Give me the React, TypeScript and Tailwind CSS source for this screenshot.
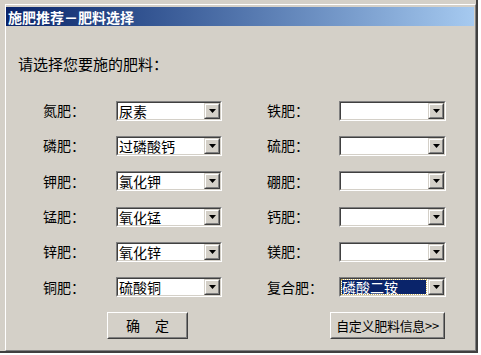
import * as React from 'react';

const font = { fontFamily: '"Noto Sans CJK SC", "Noto Sans", sans-serif' };

interface ComboProps {
  value?: string;
  selected?: boolean;
  width: string;
}

function Combo({ value, selected, width }: ComboProps) {
  return (
    <div className={`${width} h-[20px] border border-t-[#808080] border-l-[#808080] border-r-white border-b-white`}>
      <div className="flex h-full border border-t-[#404040] border-l-[#404040] border-r-[#d4d0c8] border-b-[#d4d0c8] bg-white">
        <div className="flex-1 flex items-center pl-[1px] pr-[2px] min-w-0">
          {selected ? (
            <div className="h-[14px] w-full flex items-center bg-[#0a246a] text-white text-[14px] leading-none outline-1 outline-dotted outline-[#c8b060]">
              {value}
            </div>
          ) : (
            <span className="text-[14px] leading-none text-black">{value}</span>
          )}
        </div>
        <div className="w-[16px] h-full border border-t-[#d4d0c8] border-l-[#d4d0c8] border-r-[#404040] border-b-[#404040]">
          <div className="w-full h-full flex items-center justify-center bg-[#d4d0c8] border border-t-white border-l-white border-r-[#808080] border-b-[#808080]">
            <svg width="7" height="4" viewBox="0 0 7 4">
              <path d="M0 0h7L3.5 4z" fill="#000" />
            </svg>
          </div>
        </div>
      </div>
    </div>
  );
}

function Button({ children, width }: { children: React.ReactNode; width: string }) {
  return (
    <div className={`${width} h-[27px] border border-t-white border-l-white border-r-[#404040] border-b-[#404040]`}>
      <div className="w-full h-full flex items-center justify-center whitespace-nowrap bg-[#d4d0c8] border border-t-[#d4d0c8] border-l-[#d4d0c8] border-r-[#808080] border-b-[#808080] text-[14px] text-black">
        {children}
      </div>
    </div>
  );
}

const rows: [string, string, string, string, boolean][] = [
  ['氮肥：', '尿素', '铁肥：', '', false],
  ['磷肥：', '过磷酸钙', '硫肥：', '', false],
  ['钾肥：', '氯化钾', '硼肥：', '', false],
  ['锰肥：', '氧化锰', '钙肥：', '', false],
  ['锌肥：', '氧化锌', '镁肥：', '', false],
  ['铜肥：', '硫酸铜', '复合肥：', '磷酸二铵', true],
];

export default function App() {
  return (
    <div className="w-[481px] h-[355px] bg-white" style={font}>
      <div className="w-[478px] h-[353px] bg-[#d4d0c8] pl-[5px] pt-[4px] border-r-2 border-b-2 border-[#404040]">
        <div className="h-full flex flex-col border-l border-t border-white border-r border-b border-r-[#808080] border-b-[#808080] pt-[2px]">
          <div className="h-[19px] mr-[1px] flex items-center pl-[2px] bg-gradient-to-r from-[#0a246a] to-[#a6caf0] text-white font-bold text-[14px] leading-none">
            施肥推荐－肥料选择
          </div>

          <div className="pl-[12px] pt-[28px] h-[20px] box-content flex items-center text-[15px] text-black">
            请选择您要施的肥料：
          </div>

          <div className="pl-[37px] pt-[19px] flex flex-col">
            {rows.map(([l1, v1, l2, v2, sel]) => (
              <div key={l1} className="h-[35.3px] flex items-center text-[14px] text-black">
                <div className="w-[73px]">{l1}</div>
                <Combo value={v1} width="w-[106px]" />
                <div className="w-[45px]" />
                <div className="w-[72px]">{l2}</div>
                <Combo value={v2} selected={sel} width="w-[107px]" />
              </div>
            ))}
          </div>

          <div className="flex pt-[7px] pl-[101px]">
            <Button width="w-[81px]">
              <span>确</span>
              <span className="ml-[15px]">定</span>
            </Button>
            <div className="w-[142px]" />
            <Button width="w-[115px]">
              <span className="text-[13px] tracking-[-0.3px]">自定义肥料信息&gt;&gt;</span>
            </Button>
          </div>
        </div>
      </div>
    </div>
  );
}
